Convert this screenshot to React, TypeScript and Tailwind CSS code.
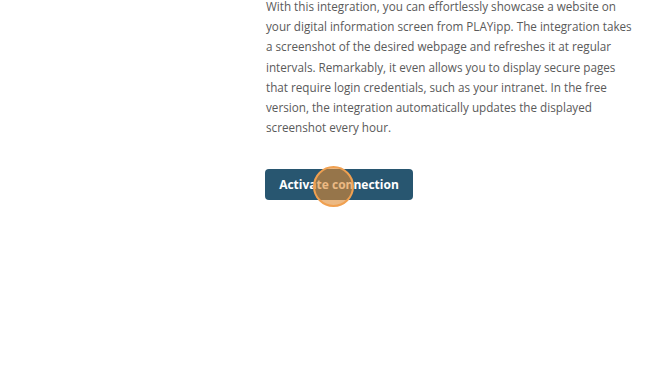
export default function App() {
  return (
    <div className="w-[670px] h-[373px] bg-white overflow-hidden relative" style={{ fontFamily: '"Open Sans", sans-serif' }}>
      <div className="pl-[266px] pr-[30px] mt-[-4px]">
        <p className="text-[11.7px] leading-[20.2px] text-[#5a5a5a] w-[372px]">
          With this integration, you can effortlessly showcase a website on your digital information screen from PLAYipp. The integration takes a screenshot of the desired webpage and refreshes it at regular intervals. Remarkably, it even allows you to display secure pages that require login credentials, such as your intranet. In the free version, the integration automatically updates the displayed screenshot every hour.
        </p>
        <div className="mt-[32px] relative w-[148px]">
          <button className="w-[148px] h-[31px] rounded-[4px] bg-[#285670] text-white text-[12px] font-bold flex items-center justify-center ml-[-1px]">
            Activate connection
          </button>
          <div className="absolute left-[47px] top-[-3px] w-[41px] h-[41px] rounded-full border-2 border-[#f0a050] bg-[#e08a30]/60 pointer-events-none" />
        </div>
      </div>
    </div>
  );
}
